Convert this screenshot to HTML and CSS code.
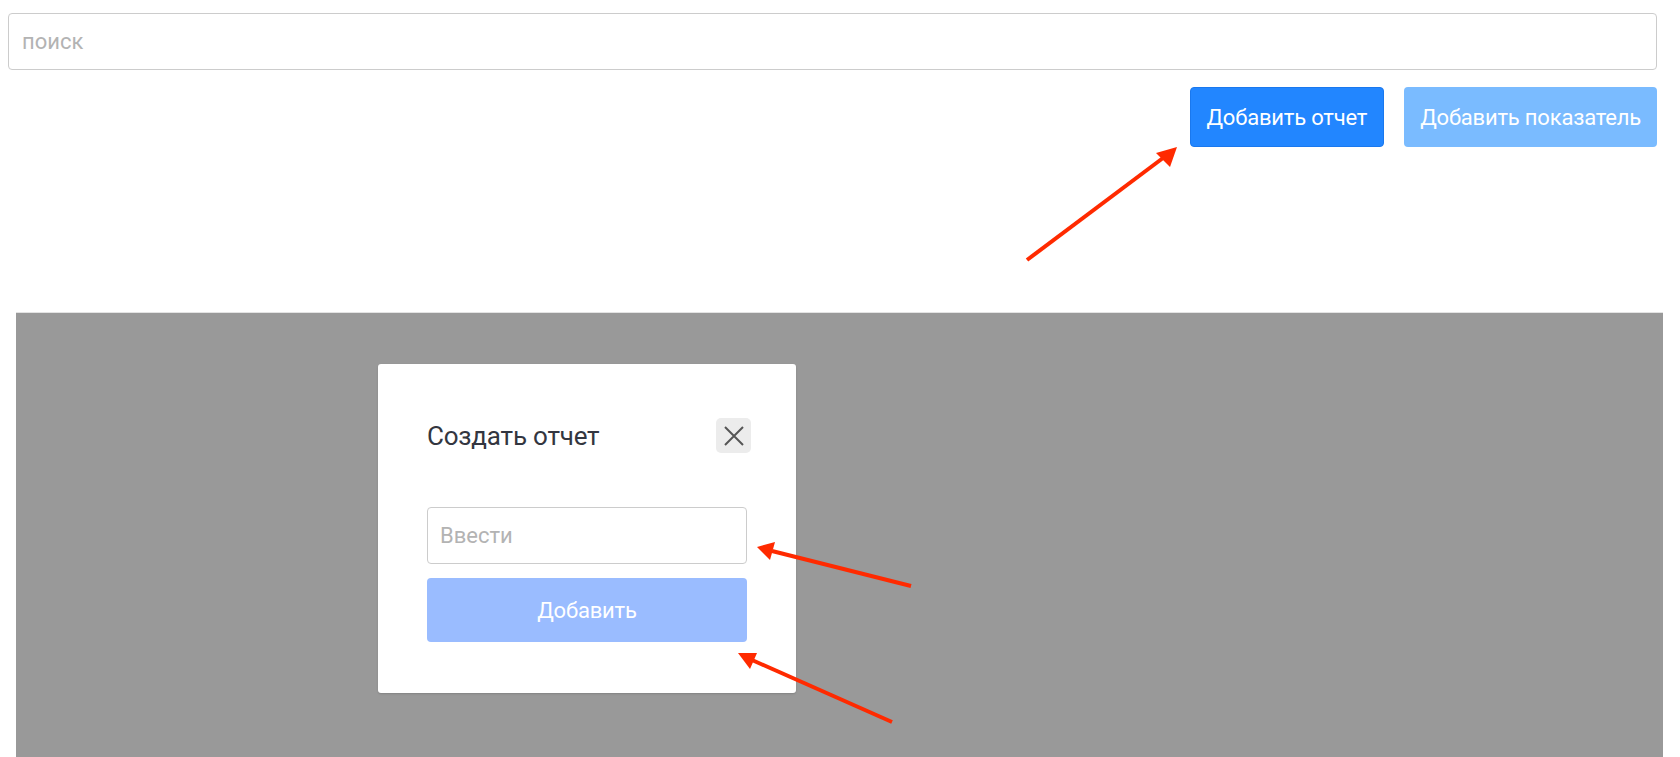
FILE: index.html
```html
<!DOCTYPE html>
<html lang="ru">
<head>
<meta charset="utf-8">
<title>Отчеты</title>
<link rel="stylesheet" href="styles.css">
</head>
<body>
<div class="page">
  <div class="search"><span class="placeholder">поиск</span></div>
  <div class="actions">
    <button class="btn btn-primary">Добавить отчет</button>
    <button class="btn btn-light">Добавить показатель</button>
  </div>
</div>
<div class="overlay">
  <div class="modal">
    <div class="modal-header">
      <div class="modal-title">Создать отчет</div>
      <button class="close" aria-label="close">
        <svg width="20" height="20" viewBox="0 0 20 20"><path d="M1 1 L19 19 M19 1 L1 19" stroke="#555" stroke-width="2" fill="none"/></svg>
      </button>
    </div>
    <div class="field"><span class="placeholder">Ввести</span></div>
    <button class="btn btn-add">Добавить</button>
  </div>
</div>
<svg class="annotations" width="1680" height="757" viewBox="0 0 1680 757">
  <g stroke="#ff2a00" stroke-width="4" fill="none">
    <line x1="1027" y1="260" x2="1163" y2="158"/>
    <line x1="911" y1="586" x2="772" y2="551"/>
    <line x1="892" y1="722" x2="752" y2="660"/>
  </g>
  <g fill="#ff2a00">
    <polygon points="1177,147 1156,153 1170,167"/>
    <polygon points="757,547 775,542 770,560"/>
    <polygon points="738,653 757,653 750,669"/>
  </g>
</svg>
</body>
</html>
```

FILE: styles.css
```css
html, body {
  margin: 0;
  padding: 0;
  background: #ffffff;
  font-family: Roboto, "Noto Sans", sans-serif;
  overflow: hidden;
  height: 757px;
}

.page {
  padding: 13px 23px 0 8px;
}

.search {
  height: 57px;
  box-sizing: border-box;
  border: 1px solid #cccccc;
  border-radius: 4px;
  display: flex;
  align-items: center;
  padding-left: 13px;
  font-size: 22px;
}

.placeholder {
  color: #b3b3b3;
}

.actions {
  display: flex;
  justify-content: flex-end;
  gap: 20px;
  margin-top: 17px;
}

.btn {
  font-family: inherit;
  font-size: 22px;
  letter-spacing: -0.2px;
  color: #ffffff;
  border: none;
  border-radius: 4px;
  height: 60px;
  padding: 0 16px;
  cursor: pointer;
}

.btn-primary {
  background: #2286ff;
  border: 1px solid #1a78ee;
}

.btn-light {
  background: #7abbff;
}

.overlay {
  margin: 165px 17px 0 16px;
  height: 445px;
  background: #999999;
  border-top: 1px solid #e3e3e3;
  padding-top: 51px;
  box-sizing: border-box;
}

.modal {
  margin-left: 362px;
  width: 418px;
  height: 329px;
  box-sizing: border-box;
  background: #ffffff;
  border-radius: 3px;
  box-shadow: 0 1px 2px rgba(0, 0, 0, 0.15);
  padding: 54px 49px 0 49px;
}

.modal-header {
  display: flex;
  justify-content: space-between;
  align-items: center;
  margin-right: -4px;
}

.modal-title {
  font-size: 26px;
  letter-spacing: -0.2px;
  color: #333640;
}

.close {
  width: 35px;
  height: 35px;
  border: none;
  border-radius: 5px;
  background: #ececec;
  display: flex;
  align-items: center;
  justify-content: center;
  padding: 0;
}

.field {
  margin-top: 54px;
  height: 57px;
  box-sizing: border-box;
  border: 1px solid #cccccc;
  border-radius: 4px;
  display: flex;
  align-items: center;
  padding-left: 12px;
  font-size: 22px;
}

.btn-add {
  display: block;
  width: 100%;
  margin-top: 14px;
  height: 64px;
  background: #9abcff;
  font-size: 22px;
}

.annotations {
  position: absolute;
  left: 0;
  top: 0;
  pointer-events: none;
}
```
